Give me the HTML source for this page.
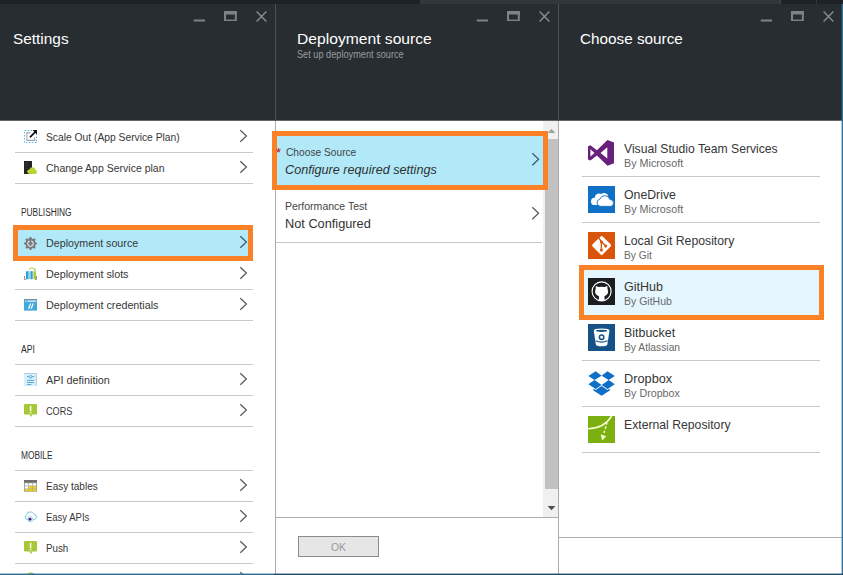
<!DOCTYPE html>
<html lang="en"><head><meta charset="utf-8"><title>Deployment source - Choose source</title>
<style>
html,body{margin:0;padding:0}
body{width:843px;height:575px;position:relative;overflow:hidden;background:#fff;font-family:"Liberation Sans",sans-serif}
.b{position:absolute;display:block}
.t{position:absolute;white-space:nowrap;transform-origin:0 0;display:block}
</style></head><body>
<div class="b" style="left:0px;top:0px;width:843px;height:4px;background:#1e2226;"></div>
<div class="b" style="left:420px;top:0px;width:360px;height:4px;background:#33373b;"></div>
<div class="b" style="left:780px;top:0px;width:1px;height:4px;background:#44484c;"></div>
<div class="b" style="left:816px;top:0px;width:1px;height:4px;background:#33373c;"></div>
<div class="b" style="left:0px;top:4px;width:843px;height:116px;background:#282d31;"></div>
<div class="b" style="left:0px;top:120px;width:843px;height:1px;background:#63666a;"></div>
<div class="b" style="left:275px;top:4px;width:1px;height:117px;background:#4d5156;"></div>
<div class="b" style="left:558px;top:4px;width:1px;height:117px;background:#4d5156;"></div>
<svg class="b" style="left:193px;top:18px" width="13" height="5" viewBox="0 0 13 5"><rect x="0.7" y="1.5" width="11.4" height="2" fill="#7f8387"/></svg>
<svg class="b" style="left:224px;top:10.8px" width="12.8" height="10.6" viewBox="0 0 12.8 10.6"><rect x="1" y="1" width="10.8" height="8.6" fill="none" stroke="#7f8387" stroke-width="2"/><rect x="0" y="0" width="12.8" height="3.5" fill="#7f8387"/></svg>
<svg class="b" style="left:256px;top:10.8px" width="11" height="11" viewBox="0 0 11 11"><path d="M0.6,0.6 L10.4,10.4 M10.4,0.6 L0.6,10.4" stroke="#878b8f" stroke-width="1.45" fill="none"/></svg>
<svg class="b" style="left:476px;top:18px" width="13" height="5" viewBox="0 0 13 5"><rect x="0.7" y="1.5" width="11.4" height="2" fill="#7f8387"/></svg>
<svg class="b" style="left:507px;top:10.8px" width="12.8" height="10.6" viewBox="0 0 12.8 10.6"><rect x="1" y="1" width="10.8" height="8.6" fill="none" stroke="#7f8387" stroke-width="2"/><rect x="0" y="0" width="12.8" height="3.5" fill="#7f8387"/></svg>
<svg class="b" style="left:539px;top:10.8px" width="11" height="11" viewBox="0 0 11 11"><path d="M0.6,0.6 L10.4,10.4 M10.4,0.6 L0.6,10.4" stroke="#878b8f" stroke-width="1.45" fill="none"/></svg>
<svg class="b" style="left:759.9px;top:18px" width="13" height="5" viewBox="0 0 13 5"><rect x="0.7" y="1.5" width="11.4" height="2" fill="#7f8387"/></svg>
<svg class="b" style="left:790.9px;top:10.8px" width="12.8" height="10.6" viewBox="0 0 12.8 10.6"><rect x="1" y="1" width="10.8" height="8.6" fill="none" stroke="#7f8387" stroke-width="2"/><rect x="0" y="0" width="12.8" height="3.5" fill="#7f8387"/></svg>
<svg class="b" style="left:822.9px;top:10.8px" width="11" height="11" viewBox="0 0 11 11"><path d="M0.6,0.6 L10.4,10.4 M10.4,0.6 L0.6,10.4" stroke="#878b8f" stroke-width="1.45" fill="none"/></svg>
<div class="b" style="left:275px;top:121px;width:1px;height:454px;background:#acacac;"></div>
<div class="b" style="left:558px;top:121px;width:1px;height:454px;background:#acacac;"></div>
<!-- left panel -->
<div class="b" style="left:15px;top:152px;width:238px;height:1px;background:#c8c8c8;"></div>
<div class="b" style="left:15px;top:183px;width:238px;height:1px;background:#c8c8c8;"></div>
<div class="b" style="left:15px;top:289px;width:238px;height:1px;background:#c8c8c8;"></div>
<div class="b" style="left:15px;top:320px;width:238px;height:1px;background:#c8c8c8;"></div>
<div class="b" style="left:15px;top:364px;width:238px;height:1px;background:#c8c8c8;"></div>
<div class="b" style="left:15px;top:395px;width:238px;height:1px;background:#c8c8c8;"></div>
<div class="b" style="left:15px;top:426px;width:238px;height:1px;background:#c8c8c8;"></div>
<div class="b" style="left:15px;top:470px;width:238px;height:1px;background:#c8c8c8;"></div>
<div class="b" style="left:15px;top:501px;width:238px;height:1px;background:#c8c8c8;"></div>
<div class="b" style="left:15px;top:532px;width:238px;height:1px;background:#c8c8c8;"></div>
<div class="b" style="left:15px;top:563px;width:238px;height:1px;background:#c8c8c8;"></div>
<div class="b" style="left:13px;top:225px;width:240px;height:36px;background:#b1e9f9;box-sizing:border-box;border:5px solid #fb8126;"></div>
<svg class="b" style="left:24px;top:130px" width="13" height="13" viewBox="0 0 13 13"><rect x="0.5" y="0.5" width="12" height="12" fill="none" stroke="#55b6e4" stroke-width="1" stroke-dasharray="1.5 1.5"/><path d="M6.2,2.9 H2.9 V10.4 H10.6 V7.2" fill="none" stroke="#a5a5ad" stroke-width="1.1"/><path d="M5.9,7.3 L11.3,1.9" stroke="#111" stroke-width="1.7"/><polygon points="8.6,0 13,0 13,4.4" fill="#111"/></svg>
<svg class="b" style="left:239px;top:129.3px" width="8.8" height="14" viewBox="0 0 8.8 14"><path d="M1.3,1.3 L7.4,7 L1.3,12.7" fill="none" stroke="#565656" stroke-width="1.2"/></svg>
<svg class="b" style="left:24px;top:161px" width="13" height="13" viewBox="0 0 13 13"><rect x="0" y="0" width="8" height="13" fill="#222426"/><path d="M1.2,2.3 H4 M1.2,4.3 H4 M1.2,7.3 H3" stroke="#3d4046" stroke-width="0.9"/><g fill="#b9d532"><circle cx="5.4" cy="10.6" r="2.2"/><circle cx="8.4" cy="9.2" r="2.9"/><circle cx="11" cy="10.9" r="2"/><rect x="5.4" y="10" width="5.6" height="2.9"/></g></svg>
<svg class="b" style="left:239px;top:160.3px" width="8.8" height="14" viewBox="0 0 8.8 14"><path d="M1.3,1.3 L7.4,7 L1.3,12.7" fill="none" stroke="#565656" stroke-width="1.2"/></svg>
<svg class="b" style="left:24px;top:236.5px" width="13" height="13" viewBox="0 0 13 13"><polygon points="5.63,0.06 7.37,0.06 7.82,1.52 9.09,2.05 10.44,1.33 11.67,2.56 10.95,3.91 11.48,5.18 12.94,5.63 12.94,7.37 11.48,7.82 10.95,9.09 11.67,10.44 10.44,11.67 9.09,10.95 7.82,11.48 7.37,12.94 5.63,12.94 5.18,11.48 3.91,10.95 2.56,11.67 1.33,10.44 2.05,9.09 1.52,7.82 0.06,7.37 0.06,5.63 1.52,5.18 2.05,3.91 1.33,2.56 2.56,1.33 3.91,2.05 5.18,1.52" fill="#777c80"/><circle cx="6.5" cy="6.6" r="2.8" fill="#81868a" stroke="#fff" stroke-width="0.95"/><rect x="5.9" y="3" width="1.2" height="3.6" fill="#6f7478"/></svg>
<svg class="b" style="left:239px;top:235.3px" width="8.8" height="14" viewBox="0 0 8.8 14"><path d="M1.3,1.3 L7.4,7 L1.3,12.7" fill="none" stroke="#3c5866" stroke-width="1.2"/></svg>
<svg class="b" style="left:24px;top:267px" width="13" height="13" viewBox="0 0 13 13"><rect x="2" y="4.2" width="2.6" height="8" fill="#2e9fd2"/><rect x="4.6" y="4.2" width="2" height="8" fill="#8ad6f4"/><rect x="6.6" y="4.2" width="2.1" height="8" fill="#2e9fd2"/><rect x="9.4" y="4.2" width="2.6" height="8" fill="#a8cb3a"/><path d="M0.5,9 V12.5 H2 M12.5,9 V12.5 H11" fill="none" stroke="#8a8a8a" stroke-width="0.9"/><path d="M4.6,2.8 Q7.6,-1 10.7,2.4" fill="none" stroke="#a8cb3a" stroke-width="1"/><polygon points="9.2,2.6 11.6,1.2 11.4,4" fill="#a8cb3a"/></svg>
<svg class="b" style="left:239px;top:266.3px" width="8.8" height="14" viewBox="0 0 8.8 14"><path d="M1.3,1.3 L7.4,7 L1.3,12.7" fill="none" stroke="#565656" stroke-width="1.2"/></svg>
<svg class="b" style="left:24px;top:298.8px" width="13" height="12" viewBox="0 0 13 12"><rect x="0" y="0" width="13" height="11.6" fill="#41a9d9"/><rect x="0" y="0" width="13" height="0.9" fill="#7f8b93"/><rect x="1" y="1.4" width="1.4" height="1.5" fill="#bfe0f0"/><rect x="3.4" y="1.4" width="8.8" height="1.5" fill="#cfe8f4"/><path d="M6.6,4.6 L4.6,9.8 M9.2,4.6 L7.2,9.8" stroke="#f4fbff" stroke-width="1.3"/></svg>
<svg class="b" style="left:239px;top:297.3px" width="8.8" height="14" viewBox="0 0 8.8 14"><path d="M1.3,1.3 L7.4,7 L1.3,12.7" fill="none" stroke="#565656" stroke-width="1.2"/></svg>
<svg class="b" style="left:24px;top:373px" width="13" height="13" viewBox="0 0 13 13"><rect x="0" y="0" width="13" height="13" fill="#d7effa"/><path d="M0,0.4 H12.6 V13" fill="none" stroke="#9cc4d8" stroke-width="0.8"/><path d="M3,3.6 H10.4 M3,7.4 H10.2 M3,9.5 H10 M3,11.5 H7.4" stroke="#4aa5d4" stroke-width="0.9"/><circle cx="6.6" cy="3.6" r="1.2" fill="#d7effa" stroke="#4aa5d4" stroke-width="0.8"/><path d="M6.6,4.8 V5.8" stroke="#4aa5d4" stroke-width="0.8"/></svg>
<svg class="b" style="left:239px;top:372.3px" width="8.8" height="14" viewBox="0 0 8.8 14"><path d="M1.3,1.3 L7.4,7 L1.3,12.7" fill="none" stroke="#565656" stroke-width="1.2"/></svg>
<svg class="b" style="left:24px;top:404.2px" width="13" height="13" viewBox="0 0 13 13"><rect x="0" y="0" width="13" height="10.5" rx="1" fill="#a6c838"/><polygon points="5.3,10.4 8.4,10.4 7,12.9" fill="#a6c838"/><rect x="5.8" y="1.9" width="1.6" height="5.1" fill="#fbffe8"/><rect x="5.8" y="7.8" width="1.6" height="1.4" fill="#fbffe8"/></svg>
<svg class="b" style="left:239px;top:403.3px" width="8.8" height="14" viewBox="0 0 8.8 14"><path d="M1.3,1.3 L7.4,7 L1.3,12.7" fill="none" stroke="#565656" stroke-width="1.2"/></svg>
<svg class="b" style="left:24px;top:479.8px" width="13" height="12" viewBox="0 0 13 12"><rect x="0" y="0" width="13" height="11.8" fill="#a3a39a"/><rect x="0" y="0" width="13" height="2.6" fill="#6f6f6f"/><rect x="1" y="3.3" width="3.3" height="2.3" fill="#ffffff"/><rect x="4.9" y="3.3" width="3.3" height="2.3" fill="#ffffff"/><rect x="8.8" y="3.3" width="3.3" height="2.3" fill="#ffffff"/><rect x="1" y="6.3" width="3.3" height="2.3" fill="#ffffff"/><rect x="4.9" y="6.3" width="3.3" height="2.3" fill="#f4d31a"/><rect x="8.8" y="6.3" width="3.3" height="2.3" fill="#f4d31a"/><rect x="1" y="9.2" width="3.3" height="2" fill="#f4d31a"/><rect x="4.9" y="9.2" width="3.3" height="2" fill="#f4d31a"/><rect x="8.8" y="9.2" width="3.3" height="2" fill="#f4d31a"/></svg>
<svg class="b" style="left:239px;top:478.3px" width="8.8" height="14" viewBox="0 0 8.8 14"><path d="M1.3,1.3 L7.4,7 L1.3,12.7" fill="none" stroke="#565656" stroke-width="1.2"/></svg>
<svg class="b" style="left:24px;top:510.6px" width="13.4" height="12" viewBox="0 0 13.4 12"><path d="M3.2,8.6 A2.7,2.7 0 0 1 2.6,3.6 A3.9,3.9 0 0 1 9.9,3.2 A2.8,2.8 0 0 1 10.6,8.6 Z" fill="#fff" stroke="#6bbfe1" stroke-width="0.9"/><circle cx="6.2" cy="8.2" r="2.8" fill="#e3f3fb" stroke="#9ed5ec" stroke-width="0.7"/><circle cx="6" cy="8.2" r="1.45" fill="#471b78"/></svg>
<svg class="b" style="left:239px;top:509.3px" width="8.8" height="14" viewBox="0 0 8.8 14"><path d="M1.3,1.3 L7.4,7 L1.3,12.7" fill="none" stroke="#565656" stroke-width="1.2"/></svg>
<svg class="b" style="left:24px;top:541.2px" width="13" height="13" viewBox="0 0 13 13"><rect x="0" y="0" width="13" height="10.5" rx="1" fill="#a6c838"/><polygon points="5.3,10.4 8.4,10.4 7,12.9" fill="#a6c838"/><rect x="5.8" y="1.9" width="1.6" height="5.1" fill="#fbffe8"/><rect x="5.8" y="7.8" width="1.6" height="1.4" fill="#fbffe8"/></svg>
<svg class="b" style="left:239px;top:540.3px" width="8.8" height="14" viewBox="0 0 8.8 14"><path d="M1.3,1.3 L7.4,7 L1.3,12.7" fill="none" stroke="#565656" stroke-width="1.2"/></svg>
<svg class="b" style="left:239px;top:571.3px" width="8.8" height="14" viewBox="0 0 8.8 14"><path d="M1.3,1.3 L7.4,7 L1.3,12.7" fill="none" stroke="#565656" stroke-width="1.2"/></svg>
<svg class="b" style="left:24px;top:571.6px" width="13" height="4" viewBox="0 0 13 4"><ellipse cx="6.7" cy="5" rx="4.6" ry="4.6" fill="#a6c838"/></svg>
<!-- middle panel -->
<div class="b" style="left:276px;top:242px;width:266px;height:1px;background:#c8c8c8;"></div>
<div class="b" style="left:276px;top:517px;width:282px;height:1px;background:#acacac;"></div>
<div class="b" style="left:543px;top:121px;width:15px;height:396px;background:#f0f0f0;"></div>
<div class="b" style="left:545px;top:139px;width:13px;height:350px;background:#c1c1c1;"></div>
<svg class="b" style="left:547px;top:128px" width="9" height="6" viewBox="0 0 9 6"><polygon points="4.5,0.8 8.4,5 0.6,5" fill="#a3a3a3"/></svg>
<svg class="b" style="left:547px;top:505px" width="9" height="6" viewBox="0 0 9 6"><polygon points="0.6,1 8.4,1 4.5,5.2" fill="#505050"/></svg>
<div class="b" style="left:272px;top:131px;width:276px;height:59px;background:#b1e9f9;box-sizing:border-box;border:5px solid #fb8126;"></div>
<svg class="b" style="left:531px;top:152.2px" width="9" height="14.6" viewBox="0 0 9 14.6"><path d="M1.3,1.3 L7.6,7.3 L1.3,13.3" fill="none" stroke="#3c5866" stroke-width="1.2"/></svg>
<svg class="b" style="left:531px;top:205.9px" width="9" height="14.6" viewBox="0 0 9 14.6"><path d="M1.3,1.3 L7.6,7.3 L1.3,13.3" fill="none" stroke="#565656" stroke-width="1.2"/></svg>
<div class="b" style="left:298px;top:536px;width:81px;height:21px;background:#e6e6e6;box-sizing:border-box;border:1px solid #8c8c8c;"></div>
<!-- right panel -->
<div class="b" style="left:582px;top:176px;width:238px;height:1px;background:#c8c8c8;"></div>
<div class="b" style="left:582px;top:222px;width:238px;height:1px;background:#c8c8c8;"></div>
<div class="b" style="left:582px;top:360px;width:238px;height:1px;background:#c8c8c8;"></div>
<div class="b" style="left:582px;top:406px;width:238px;height:1px;background:#c8c8c8;"></div>
<div class="b" style="left:582px;top:452px;width:238px;height:1px;background:#c8c8c8;"></div>
<div class="b" style="left:559px;top:537px;width:283px;height:1px;background:#acacac;"></div>
<div class="b" style="left:579px;top:265px;width:245px;height:55px;background:#e5f6fe;box-sizing:border-box;border:5px solid #fb8126;"></div>
<svg class="b" style="left:588px;top:140px" width="26" height="26" viewBox="0 0 26 26"><path fill-rule="evenodd" fill="#68217a" d="M19.5,0 L26,2.5 L26,23.3 L19.5,25.8 L8.9,15.6 L2.4,20.6 L0,19.5 L0,6.3 L2.4,5.2 L8.9,10.2 Z M2.4,9.2 L2.4,16.6 L6.5,12.9 Z M19.3,7.3 L19.3,18.5 L12.6,12.9 Z"/></svg>
<svg class="b" style="left:588px;top:186px" width="27" height="27" viewBox="0 0 27 27"><rect width="27" height="27" fill="#0f70c5"/><g fill="#fff"><circle cx="6.6" cy="15.4" r="3.6"/><circle cx="11" cy="11.8" r="4.2"/><circle cx="16" cy="11.2" r="4.3"/><rect x="6.6" y="12" width="9" height="7"/></g><g fill="#fff" stroke="#0f70c5" stroke-width="0.9"><path d="M12.4,20.3 A3.6,3.6 0 0 1 11.8,13.2 A5.3,5.3 0 0 1 21.9,13.5 A3.5,3.5 0 0 1 22.9,20.4 Z"/></g></svg>
<svg class="b" style="left:588px;top:232px" width="27" height="27" viewBox="0 0 27 27"><rect width="27" height="27" fill="#d9550b"/><rect x="6.5" y="6.3" width="14.2" height="14.2" rx="1.5" fill="#fff" transform="rotate(45 13.6 13.4)"/><path d="M10.6,5.6 L13.4,9.6 L13.4,17.8 M13.4,9.8 L17.5,13.8" fill="none" stroke="#d9550b" stroke-width="1.4"/><g fill="#d9550b"><circle cx="13.4" cy="9.7" r="1.55"/><circle cx="17.7" cy="14" r="1.55"/><circle cx="13.4" cy="18" r="1.55"/></g></svg>
<svg class="b" style="left:588px;top:278px" width="27" height="27" viewBox="0 0 27 27"><rect width="27" height="27" fill="#1b1d1f"/><circle cx="13.6" cy="13.4" r="9.5" fill="none" stroke="#fff" stroke-width="1.15"/><g fill="#fff"><ellipse cx="13.6" cy="13.7" rx="6.5" ry="5"/><polygon points="7.9,8.1 11.4,9.2 7.6,13"/><polygon points="19.3,8.1 15.8,9.2 19.6,13"/><rect x="9.6" y="9" width="8" height="3"/><path d="M10.9,17.5 H16.5 V21.4 L17.6,22.2 Q13.6,23.8 9.8,22.2 L10.9,21.4 Z"/></g></svg>
<svg class="b" style="left:588px;top:324px" width="27" height="27" viewBox="0 0 27 27"><rect width="27" height="27" fill="#165287"/><path d="M5.7,6.6 Q5.7,4.6 13.6,4.6 Q21.5,4.6 21.5,6.6 L19.4,20.2 Q19.2,22.3 13.6,22.3 Q8,22.3 7.8,20.2 Z" fill="#fff"/><ellipse cx="13.6" cy="6.8" rx="5.6" ry="1.1" fill="#165287"/><circle cx="13.6" cy="13.3" r="2.2" fill="#fff" stroke="#165287" stroke-width="1.5"/><path d="M7.6,16.8 Q13.6,19.6 19.6,16.8" fill="none" stroke="#165287" stroke-width="1.2"/></svg>
<svg class="b" style="left:588px;top:370px" width="27" height="27" viewBox="0 0 27 27"><g fill="#0d6fc8"><polygon points="0.4,6.1 7.7,1.2 13.6,5.7 6.5,10.1"/><polygon points="26.8,6.1 19.5,1.2 13.6,5.7 20.7,10.1"/><polygon points="0.4,14.2 6.5,10.1 13.6,14.9 7.7,19"/><polygon points="26.8,14.2 20.7,10.1 13.6,14.9 19.5,19"/><polygon points="5.4,18.6 7.7,20 13.6,16 19.5,20 21.8,18.6 21.8,20.6 13.6,25.8 5.4,20.6"/></g></svg>
<svg class="b" style="left:588px;top:416px" width="27" height="27" viewBox="0 0 27 27"><rect width="27" height="27" fill="#7cb010"/><path d="M0,12.8 Q16.5,12 23.6,0" fill="none" stroke="#f6ffd8" stroke-width="1.5"/><path d="M19,6.4 Q17.8,11 16,17" fill="none" stroke="#f6ffd8" stroke-width="1.4" stroke-dasharray="2.6 1.8"/><polygon points="12.6,18.2 18.2,20.2 14.2,24.4" fill="#f6ffd8"/></svg>
<!-- text -->
<span class="t" style="left:13.0px;top:31.3px;font-size:15px;line-height:15px;color:#ffffff;transform:scaleX(1.0258);">Settings</span>
<span class="t" style="left:296.6px;top:31.3px;font-size:15px;line-height:15px;color:#ffffff;transform:scaleX(1.0431);">Deployment source</span>
<span class="t" style="left:297.4px;top:50.1px;font-size:10px;line-height:10px;color:#979ba0;transform:scaleX(0.9183);">Set up deployment source</span>
<span class="t" style="left:579.9px;top:31.3px;font-size:15px;line-height:15px;color:#ffffff;transform:scaleX(1.0188);">Choose source</span>
<span class="t" style="left:45.8px;top:131.7px;font-size:11px;line-height:11px;color:#363636;transform:scaleX(0.9345);">Scale Out (App Service Plan)</span>
<span class="t" style="left:45.8px;top:162.7px;font-size:11px;line-height:11px;color:#363636;transform:scaleX(0.9544);">Change App Service plan</span>
<span class="t" style="left:20.7px;top:207.7px;font-size:10px;line-height:10px;color:#2e2e2e;transform:scaleX(0.8353);">PUBLISHING</span>
<span class="t" style="left:45.8px;top:237.7px;font-size:11px;line-height:11px;color:#363636;transform:scaleX(0.9728);">Deployment source</span>
<span class="t" style="left:45.8px;top:268.7px;font-size:11px;line-height:11px;color:#363636;transform:scaleX(0.9778);">Deployment slots</span>
<span class="t" style="left:45.8px;top:299.7px;font-size:11px;line-height:11px;color:#363636;transform:scaleX(0.9787);">Deployment credentials</span>
<span class="t" style="left:20.7px;top:344.7px;font-size:10px;line-height:10px;color:#2e2e2e;transform:scaleX(0.8620);">API</span>
<span class="t" style="left:45.8px;top:374.7px;font-size:11px;line-height:11px;color:#363636;transform:scaleX(0.9857);">API definition</span>
<span class="t" style="left:45.8px;top:405.7px;font-size:11px;line-height:11px;color:#363636;transform:scaleX(0.8275);">CORS</span>
<span class="t" style="left:20.7px;top:450.7px;font-size:10px;line-height:10px;color:#2e2e2e;transform:scaleX(0.8360);">MOBILE</span>
<span class="t" style="left:45.8px;top:480.7px;font-size:11px;line-height:11px;color:#363636;transform:scaleX(0.9090);">Easy tables</span>
<span class="t" style="left:45.8px;top:511.7px;font-size:11px;line-height:11px;color:#363636;transform:scaleX(0.8636);">Easy APIs</span>
<span class="t" style="left:45.8px;top:542.7px;font-size:11px;line-height:11px;color:#363636;transform:scaleX(0.8892);">Push</span>
<span class="t" style="left:276.4px;top:146.4px;font-size:13px;line-height:13px;color:#b80d20;transform:scaleX(0.9995);">*</span>
<span class="t" style="left:285.9px;top:146.7px;font-size:11px;line-height:11px;color:#444444;transform:scaleX(0.9271);">Choose Source</span>
<span class="t" style="left:285.4px;top:163.0px;font-size:13px;line-height:13px;color:#303030;transform:scaleX(0.9725);font-style:italic;">Configure required settings</span>
<span class="t" style="left:285.0px;top:200.5px;font-size:11px;line-height:11px;color:#444444;transform:scaleX(0.9556);">Performance Test</span>
<span class="t" style="left:285.0px;top:217.0px;font-size:13px;line-height:13px;color:#333333;transform:scaleX(0.9811);">Not Configured</span>
<span class="t" style="left:331.4px;top:542.2px;font-size:11px;line-height:11px;color:#9a9a9a;transform:scaleX(0.9430);">OK</span>
<span class="t" style="left:624.1px;top:142.1px;font-size:13px;line-height:13px;color:#363636;transform:scaleX(0.9356);">Visual Studio Team Services</span>
<span class="t" style="left:624.1px;top:157.6px;font-size:11px;line-height:11px;color:#686868;transform:scaleX(0.9783);">By Microsoft</span>
<span class="t" style="left:624.1px;top:188.1px;font-size:13px;line-height:13px;color:#363636;transform:scaleX(0.9450);">OneDrive</span>
<span class="t" style="left:624.1px;top:203.6px;font-size:11px;line-height:11px;color:#686868;transform:scaleX(0.9783);">By Microsoft</span>
<span class="t" style="left:624.1px;top:234.1px;font-size:13px;line-height:13px;color:#363636;transform:scaleX(0.9422);">Local Git Repository</span>
<span class="t" style="left:624.1px;top:249.6px;font-size:11px;line-height:11px;color:#686868;transform:scaleX(0.9281);">By Git</span>
<span class="t" style="left:624.1px;top:280.1px;font-size:13px;line-height:13px;color:#363636;transform:scaleX(0.9637);">GitHub</span>
<span class="t" style="left:624.1px;top:295.6px;font-size:11px;line-height:11px;color:#686868;transform:scaleX(0.9553);">By GitHub</span>
<span class="t" style="left:624.1px;top:326.1px;font-size:13px;line-height:13px;color:#363636;transform:scaleX(0.9573);">Bitbucket</span>
<span class="t" style="left:624.1px;top:341.6px;font-size:11px;line-height:11px;color:#686868;transform:scaleX(0.9362);">By Atlassian</span>
<span class="t" style="left:624.1px;top:372.1px;font-size:13px;line-height:13px;color:#363636;transform:scaleX(0.9809);">Dropbox</span>
<span class="t" style="left:624.1px;top:387.6px;font-size:11px;line-height:11px;color:#686868;transform:scaleX(0.9707);">By Dropbox</span>
<span class="t" style="left:624.1px;top:418.1px;font-size:13px;line-height:13px;color:#363636;transform:scaleX(0.9396);">External Repository</span><div class="b" style="left:841px;top:4px;width:1px;height:570px;background:rgba(46,107,146,0.35);"></div>
<div class="b" style="left:842px;top:4px;width:1px;height:571px;background:#34729a;"></div>
<div class="b" style="left:0px;top:573px;width:274px;height:1px;background:rgba(43,108,148,0.4);"></div>
<div class="b" style="left:274px;top:573px;width:569px;height:1px;background:rgba(27,74,102,0.4);"></div>
<div class="b" style="left:0px;top:574px;width:274px;height:1px;background:#2b6c94;"></div>
<div class="b" style="left:274px;top:574px;width:569px;height:1px;background:#1b4a66;"></div>
</body></html>
